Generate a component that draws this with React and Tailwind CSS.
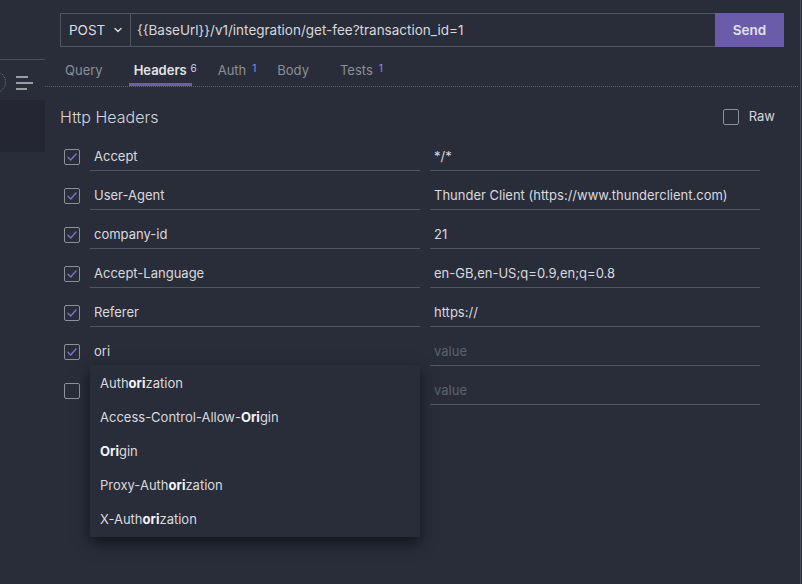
import React from "react";

const rows = [
  { name: "Accept", value: "*/*", checked: true },
  { name: "User-Agent", value: "Thunder Client (https://www.thunderclient.com)", checked: true },
  { name: "company-id", value: "21", checked: true },
  { name: "Accept-Language", value: "en-GB,en-US;q=0.9,en;q=0.8", checked: true },
  { name: "Referer", value: "https://", checked: true },
  { name: "ori", value: "", checked: true, focused: true },
  { name: "", value: "", checked: false },
];

const suggestions = [
  ["Auth", "ori", "zation"],
  ["Access-Control-Allow-", "Ori", "gin"],
  ["", "Ori", "gin"],
  ["Proxy-Auth", "ori", "zation"],
  ["X-Auth", "ori", "zation"],
];

function Checkbox({ checked }) {
  return (
    <div className="w-[16px] h-[16px] border border-[#8d9098] rounded-[2px] flex items-center justify-center">
      {checked && (
        <svg width="12" height="12" viewBox="0 0 12 12" fill="none">
          <path d="M2 6.3 L4.7 9 L10 3" stroke="#8173c9" strokeWidth="1.3" strokeLinecap="round" strokeLinejoin="round" />
        </svg>
      )}
    </div>
  );
}

function Tab({ label, sup, active }) {
  return (
    <div className="relative h-[31px] px-[5px] flex items-center">
      <span className={active ? "text-[#e4e4e6] font-semibold" : "text-[#8c8f97]"}>{label}</span>
      {sup && (
        <span className={"absolute -right-[5px] top-[6px] text-[10px] " + (active ? "text-[#d6d2f2]" : "text-[#9a8fe0]")}>{sup}</span>
      )}
      {active && <div className="absolute left-0 right-0 bottom-0 h-[3px] bg-[#6b5eae]" />}
    </div>
  );
}

export default function App() {
  return (
    <div
      className="w-[802px] h-[584px] bg-[#292d3a] flex overflow-hidden text-[13px]"
      style={{ fontFamily: "Inter, 'Noto Sans', sans-serif" }}
    >
      {/* sidebar fragment */}
      <div className="w-[45px] shrink-0 flex flex-col">
        <div className="h-[60px] border-b border-[#4a4d56]" />
        <div className="h-[40px] relative">
          <div className="absolute -left-[16px] top-[11px] w-[22px] h-[22px] rounded-full border-[1.5px] border-dotted border-[#6d707a]" />
          <div className="absolute left-[16px] top-[16px] flex flex-col gap-[4px]">
            <div className="w-[12px] h-[2px] bg-[#9a9ca4]" />
            <div className="w-[17px] h-[2px] bg-[#9a9ca4]" />
            <div className="w-[11px] h-[2px] bg-[#9a9ca4]" />
          </div>
        </div>
        <div className="h-[52px] bg-[#242733]" />
      </div>

      {/* main */}
      <div className="w-[756px] shrink-0 border-r border-[#4a4d56] flex flex-col">
        <div className="pl-[15px] pr-[16px] mt-[13px]">
          <div className="flex h-[34px]">
            <div className="w-[71px] border border-[#53565e] flex items-center justify-between pl-[8px] pr-[7px] text-[#dedee0] text-[13.5px]">
              <span>POST</span>
              <svg width="10" height="10" viewBox="0 0 10 10" fill="none">
                <path d="M2 3.5 L5 6.5 L8 3.5" stroke="#d0d0d4" strokeWidth="1.5" strokeLinecap="round" strokeLinejoin="round" />
              </svg>
            </div>
            <div className="flex-1 border-y border-[#53565e] flex items-center pl-[6px] text-[#d8d8da] text-[13.5px]">
              {"{{BaseUrl}}/v1/integration/get-fee?transaction_id=1"}
            </div>
            <div className="w-[69px] bg-[#6a5ca8] flex items-center justify-center text-[#e2e0ea] font-semibold text-[13.5px]">
              Send
            </div>
          </div>
        </div>

        <div className="mt-[8px] mr-[2px] border-b border-dotted border-[#5d606a] flex gap-[21px] pl-[15px] text-[13px]">
          <Tab label="Query" />
          <Tab label="Headers" sup="6" active />
          <Tab label="Auth" sup="1" />
          <Tab label="Body" />
          <Tab label="Tests" sup="1" />
        </div>

        <div className="pl-[15px] pr-[23px]">
          <div className="mt-[20px] h-[20px] flex items-center justify-between">
            <span className="text-[16px] font-light text-[#d6d6da]">Http Headers</span>
            <div className="flex items-center gap-[10px] mr-[2px]">
              <div className="w-[16px] h-[16px] border border-[#8d9098] rounded-[2px]" />
              <span className="text-[#d6d6da] text-[13px]">Raw</span>
            </div>
          </div>

          <div className="mt-[15px] flex flex-col gap-[10px]">
            {rows.map((r, i) => (
              <div key={i} className="flex items-start">
                <div className="w-[30px] pl-[4px] pt-[7px]">
                  <Checkbox checked={r.checked} />
                </div>
                <div
                  className={
                    "relative w-[330px] h-[29px] border-b flex items-center pl-[4px] pt-[2px] text-[#dadade] " +
                    (r.focused ? "border-[#b9bbc2]" : "border-[#53565e]")
                  }
                >
                  {r.name}
                  {r.focused && (
                    <div className="absolute left-0 top-full w-[330px] bg-[#292d3a] shadow-[0_6px_14px_rgba(0,0,0,0.55)] z-10 pt-[2px]">
                      {suggestions.map((s, j) => (
                        <div key={j} className="h-[34px] flex items-center pl-[10px] text-[#dadade]">
                          <span>{s[0]}</span>
                          <span className="font-bold text-[#f4f4f6]">{s[1]}</span>
                          <span>{s[2]}</span>
                        </div>
                      ))}
                    </div>
                  )}
                </div>
                <div className="ml-[10px] w-[330px] h-[29px] border-b border-[#53565e] flex items-center pl-[4px] pt-[2px]">
                  {r.value ? (
                    <span className="text-[#dadade]">{r.value}</span>
                  ) : (
                    <span className="text-[#5d616d]">value</span>
                  )}
                </div>
              </div>
            ))}
          </div>
        </div>
      </div>
      <div className="flex-1" />
    </div>
  );
}
